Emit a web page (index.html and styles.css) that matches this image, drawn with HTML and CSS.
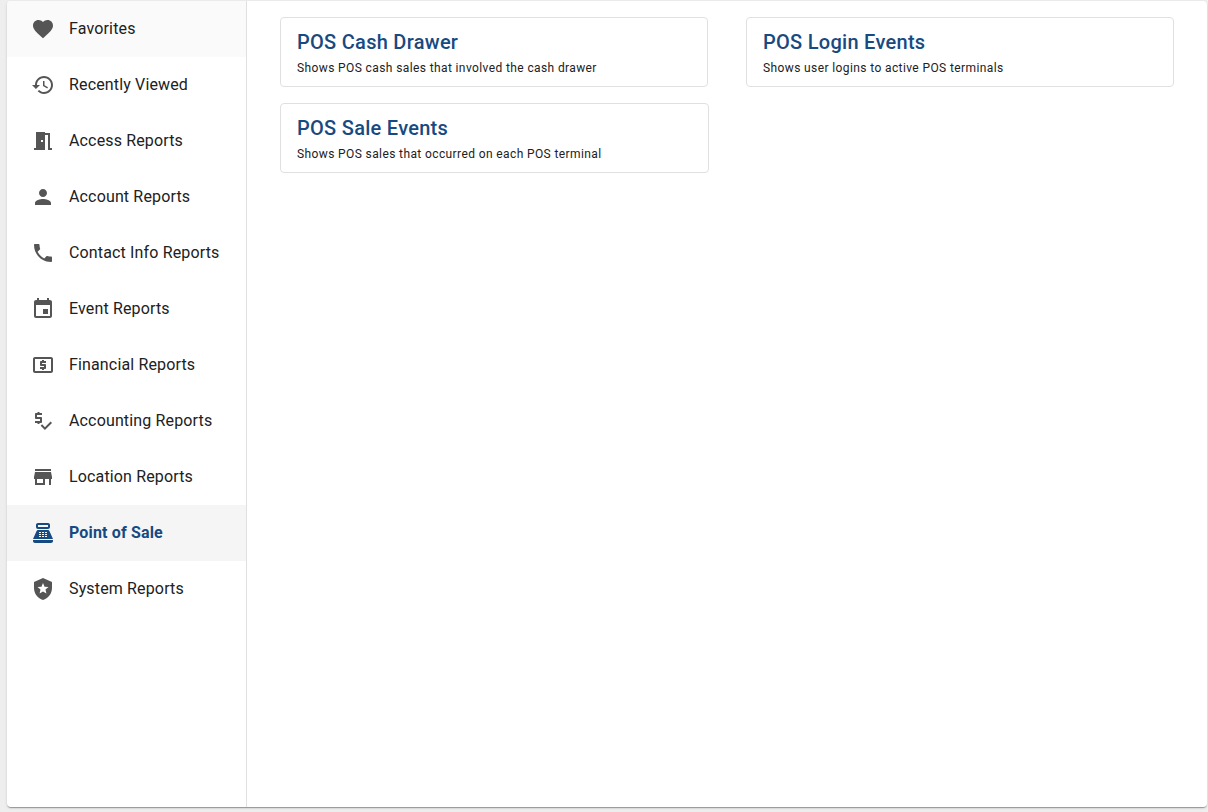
FILE: index.html
```html
<!DOCTYPE html>
<html lang="en">
<head>
<meta charset="utf-8">
<title>Reports</title>
<link rel="stylesheet" href="styles.css">
</head>
<body>
<div class="shell">
  <nav class="sidebar">
    <a class="item item-fav"><svg class="icon" viewBox="0 0 24 24"><path d="M12 21.35l-1.45-1.32C5.4 15.36 2 12.28 2 8.5 2 5.42 4.42 3 7.5 3c1.74 0 3.41.81 4.5 2.09C13.09 3.81 14.76 3 16.5 3 19.58 3 22 5.42 22 8.5c0 3.78-3.4 6.86-8.55 11.54L12 21.35z"/></svg><span class="label">Favorites</span></a>
    <a class="item"><svg class="icon" viewBox="0 0 24 24"><path d="M13 3c-4.97 0-9 4.03-9 9H1l3.89 3.89.07.14L9 12H6c0-3.87 3.13-7 7-7s7 3.13 7 7-3.13 7-7 7c-1.93 0-3.68-.79-4.94-2.06l-1.42 1.42C8.27 19.99 10.51 21 13 21c4.97 0 9-4.03 9-9s-4.03-9-9-9zm-1 5v5l4.28 2.54.72-1.21-3.5-2.08V8H12z"/></svg><span class="label">Recently Viewed</span></a>
    <a class="item"><svg class="icon" viewBox="0 0 24 24"><path d="M14 6v15H3v-2h2V3h9v1h5v15h2v2h-4V6h-3zm-4 5v2h2v-2h-2z"/></svg><span class="label">Access Reports</span></a>
    <a class="item"><svg class="icon" viewBox="0 0 24 24"><path d="M12 12c2.21 0 4-1.79 4-4s-1.79-4-4-4-4 1.79-4 4 1.79 4 4 4zm0 2c-2.67 0-8 1.34-8 4v2h16v-2c0-2.66-5.33-4-8-4z"/></svg><span class="label">Account Reports</span></a>
    <a class="item"><svg class="icon" viewBox="0 0 24 24"><path d="M6.62 10.79c1.44 2.83 3.76 5.14 6.59 6.59l2.2-2.2c.27-.27.67-.36 1.02-.24 1.12.37 2.33.57 3.57.57.55 0 1 .45 1 1V20c0 .55-.45 1-1 1-9.39 0-17-7.61-17-17 0-.55.45-1 1-1h3.5c.55 0 1 .45 1 1 0 1.25.2 2.45.57 3.57.11.35.03.74-.25 1.02l-2.2 2.2z"/></svg><span class="label">Contact Info Reports</span></a>
    <a class="item"><svg class="icon" viewBox="0 0 24 24"><path d="M17 12h-5v5h5v-5zM16 1v2H8V1H6v2H5c-1.11 0-1.99.9-1.99 2L3 19c0 1.1.89 2 2 2h14c1.1 0 2-.9 2-2V5c0-1.1-.9-2-2-2h-1V1h-2zm3 18H5V8h14v11z"/></svg><span class="label">Event Reports</span></a>
    <a class="item"><svg class="icon" viewBox="0 0 24 24"><path d="M11 17h2v-1h1c.55 0 1-.45 1-1v-3c0-.55-.45-1-1-1h-3v-1h4V8h-2V7h-2v1h-1c-.55 0-1 .45-1 1v3c0 .55.45 1 1 1h3v1H9v2h2v1zm9-13H4c-1.11 0-1.99.89-1.99 2L2 18c0 1.11.89 2 2 2h16c1.11 0 2-.89 2-2V6c0-1.11-.89-2-2-2zm0 14H4V6h16v12z"/></svg><span class="label">Financial Reports</span></a>
    <a class="item"><svg class="icon" viewBox="0 0 24 24"><path d="M11 13V9c0-.55-.45-1-1-1H6V6h5V4H8.5V3h-2v1H5c-.55 0-1 .45-1 1v4c0 .55.45 1 1 1h4v2H4v2h2.5v1h2v-1H10c.55 0 1-.45 1-1zM19.59 12.52l-5.66 5.66-2.83-2.83-1.41 1.41L13.93 21 21 13.93l-1.41-1.41z"/></svg><span class="label">Accounting Reports</span></a>
    <a class="item"><svg class="icon" viewBox="0 0 24 24"><path d="M20 4H4v2h16V4zm1 10v-2l-1-5H4l-1 5v2h1v6h10v-6h4v6h2v-6h1zm-9 4H6v-4h6v4z"/></svg><span class="label">Location Reports</span></a>
    <a class="item item-active"><svg class="icon" viewBox="0 0 24 24"><path d="M17 2H7c-1.1 0-2 .9-2 2v2c0 1.1.9 2 2 2h10c1.1 0 2-.9 2-2V4c0-1.1-.9-2-2-2zm0 4H7V4h10v2zM20 22H4c-1.1 0-2-.9-2-2v-1h20v1c0 1.100-.9 2-2 2zM18.530 10.190C18.210 9.470 17.490 9 16.700 9H7.300c-.79 0-1.510.47-1.830 1.190L2 18h20l-3.470-7.810zM8 11h2v1H8zM8 13h2v1H8zM8 15h2v1H8zM11 11h2v1h-2zM11 13h2v1h-2zM11 15h2v1h-2zM14 11h2v1h-2zM14 13h2v1h-2zM14 15h2v1h-2z" fill-rule="evenodd"/></svg><span class="label">Point of Sale</span></a>
    <a class="item"><svg class="icon" viewBox="0 0 24 24"><path d="M12 1L3 5v6c0 5.55 3.84 10.74 9 12 5.16-1.26 9-6.45 9-12V5l-9-4zm2.500 11.590l.9 3.880L12 14.420l-3.400 2.050.9-3.870-3-2.590 3.960-.34L12 6.020l1.540 3.640L17.500 10l-3 2.590z"/></svg><span class="label">System Reports</span></a>
  </nav>
  <main class="content">
    <div class="grid">
      <a class="card"><h2 class="card-title">POS Cash Drawer</h2><p class="card-desc">Shows POS cash sales that involved the cash drawer</p></a>
      <a class="card"><h2 class="card-title">POS Login Events</h2><p class="card-desc">Shows user logins to active POS terminals</p></a>
      <a class="card card-wide"><h2 class="card-title">POS Sale Events</h2><p class="card-desc">Shows POS sales that occurred on each POS terminal</p></a>
    </div>
  </main>
</div>
</body>
</html>
```
FILE: styles.css
```css
* { box-sizing: border-box; }
html, body { height: 100%; }
body {
  margin: 0;
  padding: 1px 1px 5px 7px;
  background: #eeeeee;
  font-family: Roboto, "Liberation Sans", sans-serif;
  overflow: hidden;
}
.shell {
  display: flex;
  height: 100%;
  background: #ffffff;
  border-radius: 4px;
  overflow: hidden;
  box-shadow: 0 2px 1px -1px rgba(0,0,0,.2), 0 1px 1px 0 rgba(0,0,0,.14), 0 1px 3px 0 rgba(0,0,0,.12);
}
.sidebar {
  flex: 0 0 240px;
  border-right: 1px solid #e0e0e0;
  display: flex;
  flex-direction: column;
}
.item {
  display: flex;
  align-items: center;
  height: 56px;
  padding-left: 24px;
  font-size: 16px;
  letter-spacing: 0.15px;
  color: #212121;
}
.label { padding-bottom: 2px; }
.item-fav { background: #fafafa; }
.item-active { background: #f5f5f5; color: #174a80; font-weight: 700; letter-spacing: 0.15px; }
.icon {
  width: 24px;
  height: 24px;
  margin-right: 14px;
  fill: #555555;
  flex: none;
}
.item-active .icon { fill: #174a80; }
.content { flex: 1; padding: 16px 33px 0; }
.grid {
  display: grid;
  grid-template-columns: 428.4px 428.4px;
  column-gap: 37.6px;
  row-gap: 16px;
}
.card {
  display: block;
  height: 70px;
  padding: 11px 16px;
  border: 1px solid #e0e0e0;
  border-radius: 4px;
  background: #ffffff;
}
.card-wide { margin-right: -1px; }
.card-title {
  margin: 0;
  font-size: 20px;
  font-weight: 500;
  line-height: 26px;
  letter-spacing: 0.28px;
  color: #174a80;
}
.card-desc {
  margin: 5px 0 0;
  font-size: 12px;
  line-height: 16px;
  letter-spacing: 0.39px;
  color: #212121;
}
```
